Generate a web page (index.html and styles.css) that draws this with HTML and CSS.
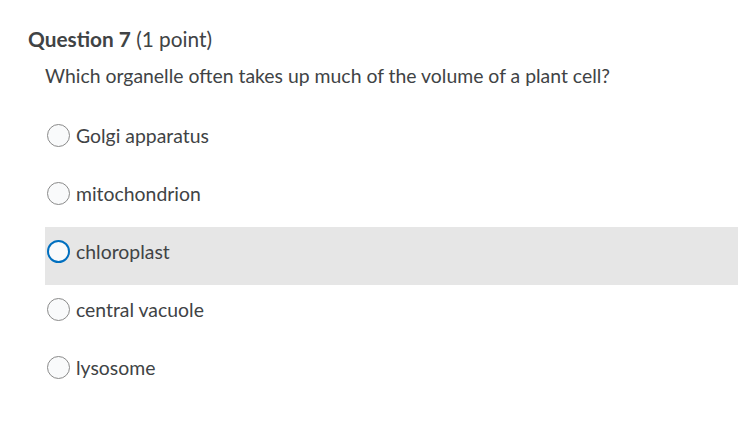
FILE: index.html
```html
<!DOCTYPE html>
<html>
<head>
<meta charset="utf-8">
<link rel="stylesheet" href="styles.css">
</head>
<body>
<div class="quiz">
  <h2 class="title"><strong>Question 7</strong> <span class="pts">(1 point)</span></h2>
  <p class="question">Which organelle often takes up much of the volume of a plant cell?</p>
  <div class="options">
    <label class="option"><span class="radio"></span><span class="label">Golgi apparatus</span></label>
    <label class="option"><span class="radio"></span><span class="label">mitochondrion</span></label>
    <label class="option focus"><span class="radio"></span><span class="label">chloroplast</span></label>
    <label class="option"><span class="radio"></span><span class="label">central vacuole</span></label>
    <label class="option"><span class="radio"></span><span class="label">lysosome</span></label>
  </div>
</div>
</body>
</html>
```
FILE: styles.css
```css
html, body {
  margin: 0;
  padding: 0;
  background: #ffffff;
}
body {
  font-family: Lato, "Open Sans", sans-serif;
  color: #404345;
}
.quiz {
  padding-top: 26px;
}
.title {
  margin: 0 0 0 28px;
  font-size: 20.8px;
  line-height: 26px;
  font-weight: 400;
}
.title strong {
  font-weight: 700;
}
.question {
  margin: 11px 0 0 45px;
  font-size: 19.4px;
  line-height: 26px;
}
.options {
  margin: 22px 0 0 45px;
  display: flex;
  flex-direction: column;
}
.option {
  display: flex;
  align-items: center;
  height: 58px;
  padding: 0 0 9px 2px;
  box-sizing: border-box;
  gap: 6px;
  font-size: 19.4px;
}
.option.focus {
  background: #e6e6e6;
}
.radio {
  width: 21px;
  height: 21px;
  border: 1px solid #8a8a8a;
  border-radius: 50%;
  background: #f9fafb;
  flex: none;
}
.focus .radio {
  border: 2px solid #006fbf;
  width: 19px;
  height: 19px;
}
```
